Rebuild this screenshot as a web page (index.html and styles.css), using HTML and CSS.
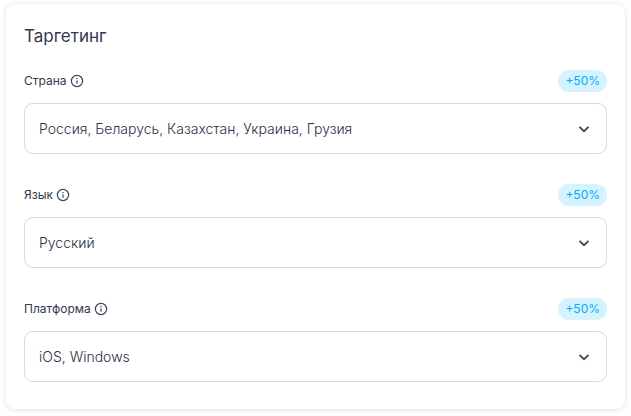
FILE: index.html
```html
<!DOCTYPE html>
<html lang="ru">
<head>
    <meta charset="UTF-8">
    <meta name="viewport" content="width=device-width, initial-scale=1.0">
    <title>Таргетинг</title>
    <link rel="stylesheet" href="styles.css">
</head>
<body>

    <form class="card">
        <h2>Таргетинг</h2>

        <div class="field">
            <div class="field-header">
                <label for="country">Страна</label>
                <svg class="info" viewBox="0 0 14 14" aria-hidden="true"><circle cx="7" cy="7" r="5.6"/><path d="M7 6.4v3.4M7 4.1v1.2"/></svg>
                <span class="badge">+50%</span>
            </div>
            <div class="select-wrapper">
                <select id="country">
                    <option>Россия, Беларусь, Казахстан, Украина, Грузия</option>
                </select>
                <svg class="chevron" viewBox="0 0 12 12" aria-hidden="true"><path d="M1.5 3.8l4.5 4.4 4.5-4.4"/></svg>
            </div>
        </div>

        <div class="field">
            <div class="field-header">
                <label for="language">Язык</label>
                <svg class="info" viewBox="0 0 14 14" aria-hidden="true"><circle cx="7" cy="7" r="5.6"/><path d="M7 6.4v3.4M7 4.1v1.2"/></svg>
                <span class="badge">+50%</span>
            </div>
            <div class="select-wrapper">
                <select id="language">
                    <option>Русский</option>
                </select>
                <svg class="chevron" viewBox="0 0 12 12" aria-hidden="true"><path d="M1.5 3.8l4.5 4.4 4.5-4.4"/></svg>
            </div>
        </div>

        <div class="field">
            <div class="field-header">
                <label for="platform">Платформа</label>
                <svg class="info" viewBox="0 0 14 14" aria-hidden="true"><circle cx="7" cy="7" r="5.6"/><path d="M7 6.4v3.4M7 4.1v1.2"/></svg>
                <span class="badge">+50%</span>
            </div>
            <div class="select-wrapper">
                <select id="platform">
                    <option>iOS, Windows</option>
                </select>
                <svg class="chevron" viewBox="0 0 12 12" aria-hidden="true"><path d="M1.5 3.8l4.5 4.4 4.5-4.4"/></svg>
            </div>
        </div>
    </form>

</body>
</html>
```

FILE: styles.css
```css
body { font-family: Inter, sans-serif; margin: 0; padding: 4px 6px; background-color: #fff; color: #33374f; }
.card { background: #fff; padding: 20px 18px 27px; border-radius: 9px; box-shadow: 0 1px 6px rgba(0,0,0,0.12); }
h2 { font-size: 17px; line-height: 24px; font-weight: 400; margin: 0 0 22px; }
.field + .field { margin-top: 30px; }
.field-header { display: flex; align-items: center; gap: 3px; margin-bottom: 11px; }
label { font-size: 12px; line-height: 14px; font-weight: 400; }
.info { width: 14px; height: 14px; fill: none; stroke: #3f4359; stroke-width: 1.2; }
.badge { margin-left: auto; padding: 4px 7px; border-radius: 11px; background-color: #d5f2ff; color: #00adf8; font-size: 12px; line-height: 14px; font-weight: 400; }
.select-wrapper { position: relative; }
select { display: block; width: 100%; height: 51px; padding: 0 40px 0 14px; box-sizing: border-box; appearance: none; border: 1px solid #d9d9dc; border-radius: 9px; background: #fff; color: #2b2f48; font-family: inherit; font-size: 14px; font-weight: 300; cursor: pointer; }
.chevron { position: absolute; top: 50%; right: 17px; width: 12px; height: 12px; margin-top: -6px; fill: none; stroke: #3f4359; stroke-width: 1.8; pointer-events: none; }
```
